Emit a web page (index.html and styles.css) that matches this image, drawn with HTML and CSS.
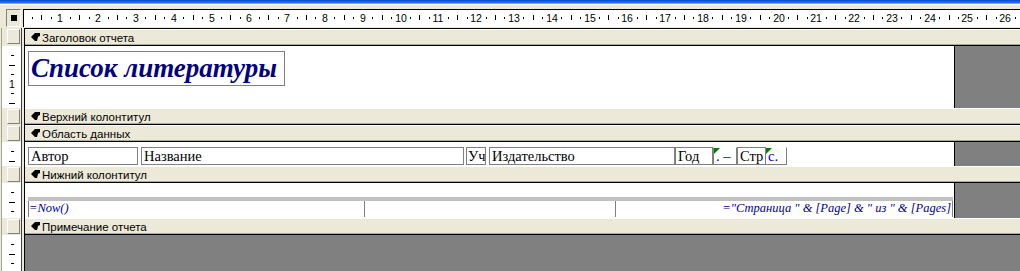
FILE: index.html
```html
<!DOCTYPE html>
<html lang="ru">

<head>
    <meta charset="UTF-8">
    <title>Отчет: Список литературы</title>
    <link rel="stylesheet" href="styles.css">
</head>

<body>
    <div class="window">
        <div class="titlebar"></div>
        <div class="edge"></div>
        <div class="toprow">
            <div class="corner"><div class="corner-box"><span class="corner-dot"></span></div></div>
            <div class="hruler" id="hruler"></div>
        </div>
        <div class="gap"></div>

        <div class="design">
            <!-- Заголовок отчета -->
            <div class="row">
                <div class="vr vr-bar"><span class="knob"></span></div>
                <div class="gutter"></div>
                <div class="main first">
                    <div class="bar"><svg class="sel" width="9" height="8" viewBox="0 0 9 8"><polygon points="0,4 4,0 9,0 9,3 7,4 6,8 4,8"/></svg>Заголовок отчета</div>
                </div>
            </div>
            <div class="row sec-header">
                <div class="vr" data-len="62"></div>
                <div class="gutter"></div>
                <div class="main">
                    <div class="surface">
                        <div class="title-box">Список литературы</div>
                    </div>
                    <div class="offpage"></div>
                </div>
            </div>

            <!-- Верхний колонтитул -->
            <div class="row">
                <div class="vr vr-bar"><span class="knob"></span></div>
                <div class="gutter"></div>
                <div class="main">
                    <div class="bar"><svg class="sel" width="9" height="8" viewBox="0 0 9 8"><polygon points="0,4 4,0 9,0 9,3 7,4 6,8 4,8"/></svg>Верхний колонтитул</div>
                </div>
            </div>

            <!-- Область данных -->
            <div class="row">
                <div class="vr vr-bar"><span class="knob"></span></div>
                <div class="gutter"></div>
                <div class="main">
                    <div class="bar"><svg class="sel" width="9" height="8" viewBox="0 0 9 8"><polygon points="0,4 4,0 9,0 9,3 7,4 6,8 4,8"/></svg>Область данных</div>
                </div>
            </div>
            <div class="row sec-data">
                <div class="vr" data-len="24"></div>
                <div class="gutter"></div>
                <div class="main">
                    <div class="surface">
                        <div class="fields">
                            <div class="field f-author">Автор</div>
                            <div class="field f-title">Название</div>
                            <div class="field f-uch">Уч</div>
                            <div class="field f-pub">Издательство</div>
                            <div class="field f-year">Год</div>
                            <div class="field f-dash calc"><span class="flag"></span>. –</div>
                            <div class="field f-pages">Стр</div>
                            <div class="field f-s calc"><span class="flag"></span>с.</div>
                        </div>
                    </div>
                    <div class="offpage"></div>
                </div>
            </div>

            <!-- Нижний колонтитул -->
            <div class="row">
                <div class="vr vr-bar"><span class="knob"></span></div>
                <div class="gutter"></div>
                <div class="main">
                    <div class="bar"><svg class="sel" width="9" height="8" viewBox="0 0 9 8"><polygon points="0,4 4,0 9,0 9,3 7,4 6,8 4,8"/></svg>Нижний колонтитул</div>
                </div>
            </div>
            <div class="row sec-footer">
                <div class="vr" data-len="35"></div>
                <div class="gutter"></div>
                <div class="main">
                    <div class="surface">
                        <div class="footer-line"></div>
                        <div class="footer-fields">
                            <div class="ffield ff-now">=Now()</div>
                            <div class="ffield ff-mid"></div>
                            <div class="ffield ff-page">="Страница " &amp; [Page] &amp; " из " &amp; [Pages]</div>
                        </div>
                    </div>
                    <div class="offpage"></div>
                </div>
            </div>

            <!-- Примечание отчета -->
            <div class="row">
                <div class="vr vr-bar"><span class="knob"></span></div>
                <div class="gutter"></div>
                <div class="main">
                    <div class="bar"><svg class="sel" width="9" height="8" viewBox="0 0 9 8"><polygon points="0,4 4,0 9,0 9,3 7,4 6,8 4,8"/></svg>Примечание отчета</div>
                </div>
            </div>
            <div class="row sec-rest">
                <div class="vr" data-len="36"></div>
                <div class="gutter"></div>
                <div class="main empty"></div>
            </div>
        </div>
    </div>

    <script>
        var CM = 37.8;

        // top ruler
        var hr = document.getElementById("hruler");
        var w = 996, svg = "";
        for (var k = 1; k <= 4 * 27; k++) {
            var x = Math.round(-1.5 + k * CM / 4);
            if (x > w) break;
            if (k % 4 == 0) {
                svg += '<text x="' + x + '" y="11.5" text-anchor="middle">' + (k / 4) + '</text>';
            } else if (k % 4 == 2) {
                svg += '<rect x="' + x + '" y="5" width="1" height="5"/>';
            } else {
                svg += '<rect x="' + x + '" y="7" width="1" height="2"/>';
            }
        }
        hr.innerHTML = '<svg width="' + w + '" height="17">' + svg + '</svg>';

        // left ruler
        var cells = document.querySelectorAll(".vr[data-len]");
        for (var i = 0; i < cells.length; i++) {
            var len = parseInt(cells[i].getAttribute("data-len"));
            var s = "";
            for (var n = 1; n * CM / 4 < len; n++) {
                var y = Math.round(n * CM / 4);
                if (n % 4 == 0) {
                    s += '<text x="10" y="' + (y + 4) + '" text-anchor="middle">' + (n / 4) + '</text>';
                } else if (n % 4 == 2) {
                    s += '<rect x="7" y="' + y + '" width="6" height="1"/>';
                } else {
                    s += '<rect x="9" y="' + y + '" width="3" height="1"/>';
                }
            }
            cells[i].innerHTML = '<svg width="19" height="' + len + '">' + s + '</svg>';
        }
    </script>
</body>

</html>
```

FILE: styles.css
```css
body {
    margin: 0;
    background-color: #ece9d8;
    font-family: "Liberation Sans", Tahoma, sans-serif;
}

.window {
    width: 1020px;
    height: 271px;
    overflow: hidden;
    display: flex;
    flex-direction: column;
}

.titlebar {
    flex-shrink: 0;
    height: 3px;
    background: linear-gradient(#0b48d6, #2f6fef);
}

.edge {
    flex-shrink: 0;
    height: 5px;
    border-top: 1px solid #a5a497;
    box-shadow: inset 0 1px #fff;
}

.toprow {
    flex-shrink: 0;
    display: flex;
    height: 18px;
}

.corner {
    width: 24px;
}

.corner-box {
    margin-left: 6px;
    width: 13px;
    height: 16px;
    border: 1px solid;
    border-color: #808080 #fff #fff #808080;
    display: flex;
    align-items: center;
    justify-content: center;
}

.corner-dot {
    width: 6px;
    height: 6px;
    background-color: #000;
}

.hruler {
    flex: 1;
    background-color: #fff;
    border-top: 1px solid #000;
    border-left: 1px solid #000;
}

.hruler svg,
.vr svg {
    display: block;
    font-family: "Liberation Sans", Tahoma, sans-serif;
    font-size: 10.5px;
}

.gap {
    flex-shrink: 0;
    height: 1px;
}

.design {
    flex: 1;
    min-height: 0;
    display: flex;
    flex-direction: column;
}

.row {
    flex-shrink: 0;
    display: flex;
}

.vr {
    width: 19px;
    margin-left: 1px;
    border-left: 1px solid #a5a497;
    border-right: 1px solid #404040;
    background-color: #fff;
    overflow: hidden;
}

.vr-bar {
    background-color: #ece9d8;
}

.knob {
    display: block;
    margin: 1px 0 0 5px;
    width: 11px;
    height: 13px;
    border: 1px solid;
    border-color: #fff #808080 #808080 #fff;
}

.gutter {
    width: 2px;
}

.main {
    flex: 1;
    display: flex;
    border-left: 1px solid #000;
}

.main.first {
    border-top: 1px solid #000;
}

.bar {
    flex: 1;
    height: 15px;
    border-top: 1px solid #fff;
    border-bottom: 1px solid #000;
    box-shadow: inset 0 -1px #aca899;
    display: flex;
    align-items: center;
    gap: 2px;
    padding-left: 6px;
    font-size: 11.5px;
    color: #000;
}

.sel {
    fill: #000;
    margin-top: -1px;
}

.surface {
    width: 929px;
    background-color: #fff;
    border-right: 1px solid #000;
}

.offpage {
    flex: 1;
    background-color: #808080;
}

.sec-header {
    height: 62px;
}

.sec-data {
    height: 24px;
}

.sec-footer {
    height: 35px;
}

.sec-rest {
    flex: 1;
    min-height: 0;
}

.main.empty {
    background-color: #808080;
}

/* header */
.title-box {
    margin: 5px 0 0 3px;
    width: 257px;
    height: 35px;
    box-sizing: border-box;
    border: 1px solid #808080;
    padding-left: 2px;
    font-family: "Liberation Serif", "Times New Roman", serif;
    font-size: 27px;
    font-weight: bold;
    font-style: italic;
    line-height: 33px;
    color: #000080;
    white-space: nowrap;
}

/* data */
.fields {
    display: flex;
    padding: 5px 0 0 3px;
}

.field {
    position: relative;
    height: 18px;
    box-sizing: border-box;
    border: 1px solid #808080;
    padding-left: 2px;
    font-family: "Liberation Serif", "Times New Roman", serif;
    font-size: 14.5px;
    line-height: 16px;
    white-space: nowrap;
    overflow: hidden;
    color: #000;
}

.f-author { width: 110px; }
.f-title { width: 323px; margin-left: 3px; }
.f-uch { width: 20px; margin-left: 2px; padding-left: 1px; }
.f-pub { width: 186px; margin-left: 3px; }
.f-year { width: 38px; margin-left: 0; }
.f-dash { width: 24px; border-top-color: #fff; }
.f-pages { width: 29px; }
.f-s { width: 21px; border-left: none; border-top-color: #fff; }

.calc {
    color: #0000c0;
}

.flag {
    position: absolute;
    left: 0;
    top: 0;
    width: 0;
    height: 0;
    border-top: 6px solid #008000;
    border-right: 6px solid transparent;
}

/* footer */
.footer-line {
    margin: 14px 0 0 3px;
    width: 925px;
    height: 4px;
    background-color: #c0c0c0;
}

.footer-fields {
    display: flex;
    margin-left: 3px;
    height: 16px;
    width: 925px;
}

.ffield {
    box-sizing: border-box;
    border-left: 1px solid #808080;
    font-family: "Liberation Serif", "Times New Roman", serif;
    font-style: italic;
    font-size: 12.5px;
    line-height: 15px;
    color: #000090;
    white-space: nowrap;
    overflow: hidden;
}

.ff-now { width: 336px; }
.ff-mid { width: 251px; }
.ff-page {
    flex: 1;
    border-right: 1px solid #808080;
    text-align: right;
    padding-right: 1px;
}
```
